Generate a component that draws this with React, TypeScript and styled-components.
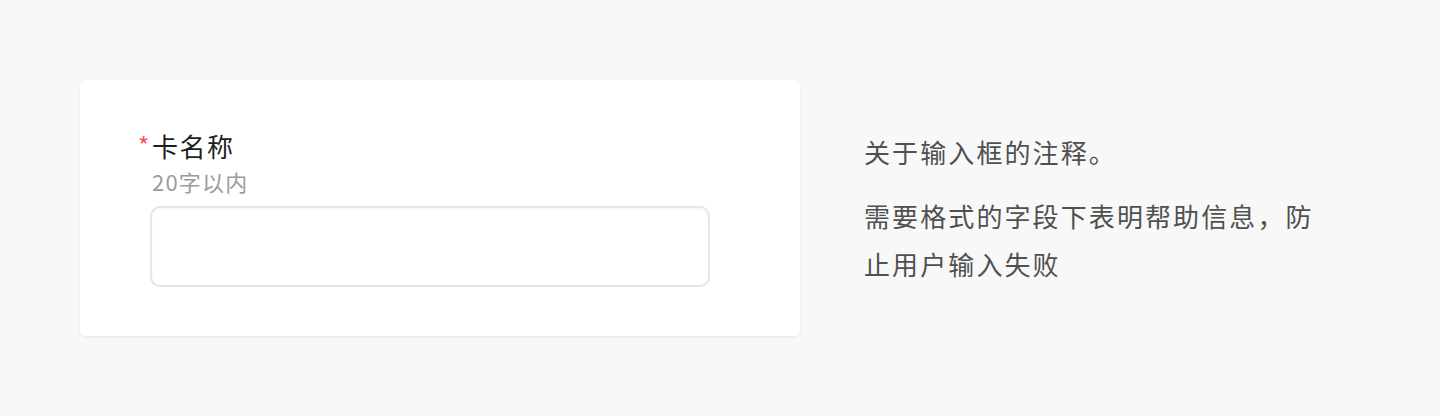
import styled, { createGlobalStyle } from "styled-components";

const GlobalStyle = createGlobalStyle`
  html, body {
    margin: 0;
    padding: 0;
    background: #f8f8f8;
  }
  body {
    font-family: "Noto Sans CJK SC", "Noto Sans", sans-serif;
  }
`;

const Page = styled.div`
  width: 1440px;
  height: 416px;
  box-sizing: border-box;
  padding: 80px 0 0 80px;
  display: flex;
  align-items: flex-start;
  gap: 64px;
`;

const Card = styled.div`
  width: 720px;
  height: 256px;
  box-sizing: border-box;
  background: #fff;
  border-radius: 6px;
  box-shadow: 0 1px 3px rgba(0, 0, 0, 0.08);
  padding: 48px 90px 0 70px;
`;

const Label = styled.div`
  display: flex;
  align-items: flex-start;
  margin-left: -12px;
  font-size: 26px;
  line-height: 36px;
  letter-spacing: 1.5px;
  color: #1f1f1f;
`;

const Star = styled.span`
  color: #ff4d4f;
  font-size: 24px;
  line-height: 34px;
  width: 14px;
  letter-spacing: 0;
`;

const Hint = styled.div`
  margin: 1px 0 0 2px;
  font-size: 22px;
  line-height: 32px;
  letter-spacing: 1.2px;
  color: #9b9b9b;
`;

const Input = styled.input`
  display: block;
  margin: 9px 0 0 0;
  width: 560px;
  height: 81px;
  box-sizing: border-box;
  border: 2px solid #e6e6e6;
  border-radius: 10px;
  background: #fff;
  box-shadow: inset 0 2px 3px rgba(0, 0, 0, 0.03);
  outline: none;
`;

const Notes = styled.div`
  padding-top: 48px;
  width: 470px;
  color: #505050;
  font-size: 26px;
  letter-spacing: 2.1px;
`;

const Note = styled.p<{ $gap?: number }>`
  margin: 0;
  margin-top: ${(p) => p.$gap ?? 0}px;
  line-height: 48px;
`;

export default function App() {
  return (
    <>
      <GlobalStyle />
      <Page>
        <Card>
          <Label>
            <Star>*</Star>
            卡名称
          </Label>
          <Hint>20字以内</Hint>
          <Input />
        </Card>
        <Notes>
          <Note>关于输入框的注释。</Note>
          <Note $gap={16}>需要格式的字段下表明帮助信息，防止用户输入失败</Note>
        </Notes>
      </Page>
    </>
  );
}
